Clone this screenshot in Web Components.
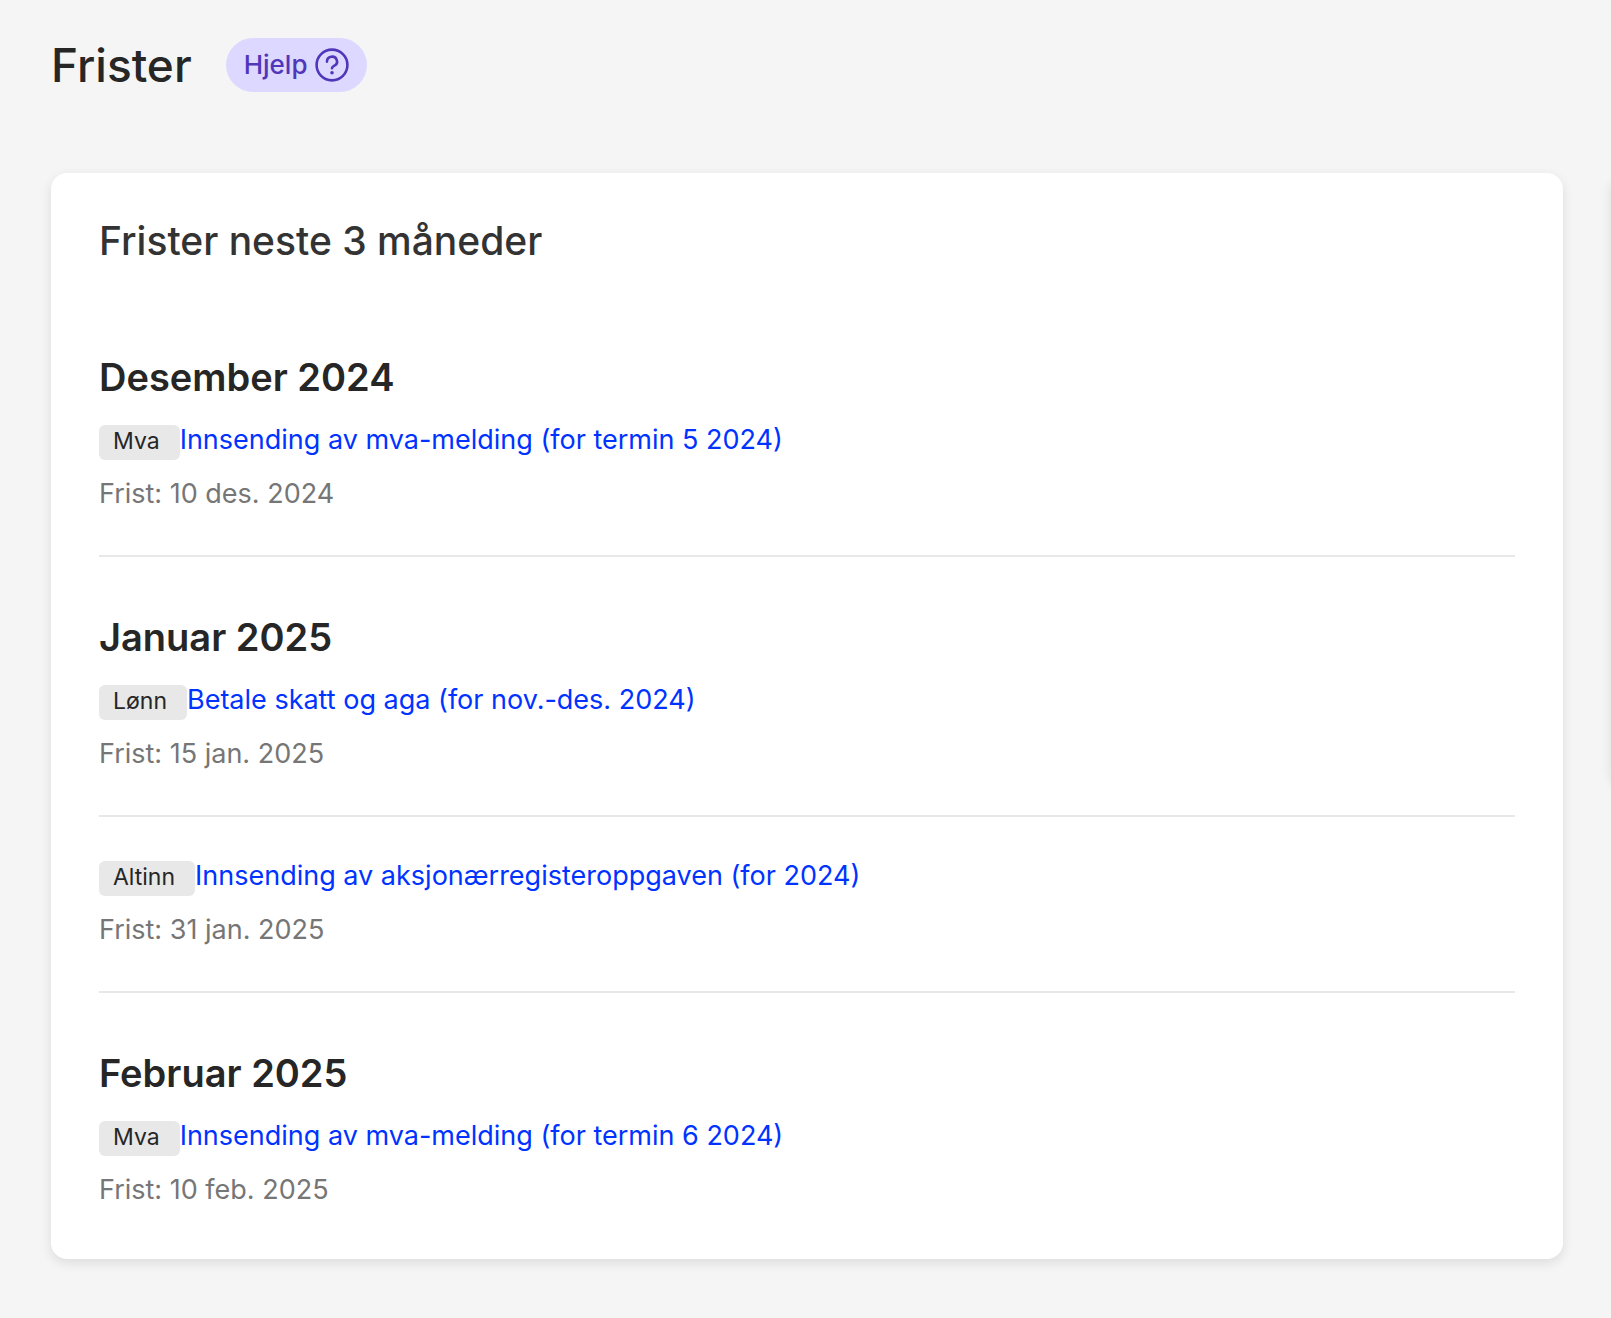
<!DOCTYPE html>
<html lang="nb">
<head>
<meta charset="utf-8">
<title>Frister</title>
<style>
  html { background: #f5f5f5; }
  body { margin: 0; min-height: 100vh; font-family: Inter, "Liberation Sans", sans-serif; color: #262626; }
</style>
</head>
<body>
<deadline-page>
  <page-header slot="header">Frister<help-button slot="action">Hjelp</help-button></page-header>
  <content-card heading="Frister neste 3 måneder">
    <month-group month="Desember 2024">
      <deadline-item category="Mva" due="Frist: 10 des. 2024">Innsending av mva-melding (for termin 5 2024)</deadline-item>
    </month-group>
    <month-group month="Januar 2025">
      <deadline-item category="Lønn" due="Frist: 15 jan. 2025">Betale skatt og aga (for nov.-des. 2024)</deadline-item>
      <deadline-item category="Altinn" due="Frist: 31 jan. 2025">Innsending av aksjonærregisteroppgaven (for 2024)</deadline-item>
    </month-group>
    <month-group month="Februar 2025">
      <deadline-item last category="Mva" due="Frist: 10 feb. 2025">Innsending av mva-melding (for termin 6 2024)</deadline-item>
    </month-group>
  </content-card>
  <side-card slot="side"></side-card>
</deadline-page>
<script>
const define = (name, html, setup) => {
  const template = document.createElement('template');
  template.innerHTML = html;
  customElements.define(name, class extends HTMLElement {
    constructor() {
      super();
      this.attachShadow({ mode: 'open' }).append(template.content.cloneNode(true));
    }
    connectedCallback() {
      if (setup) setup(this, this.shadowRoot);
    }
  });
};

define('deadline-page', `
  <style>
    :host { display: block; overflow: hidden; padding: 37px 48px 48px 51px; }
    .columns { display: flex; gap: 48px; align-items: flex-start; padding-top: 80px; }
    main { flex: 0 0 100%; min-width: 0; }
  </style>
  <slot name="header"></slot>
  <div class="columns">
    <main><slot></slot></main>
    <slot name="side"></slot>
  </div>`);

define('page-header', `
  <style>
    :host { display: block; }
    header { display: flex; align-items: center; gap: 34px; }
    h1 { margin: 0; font-size: 46px; line-height: 56px; font-weight: 500; }
  </style>
  <header><h1><slot></slot></h1><slot name="action"></slot></header>`);

define('help-button', `
  <style>
    :host { display: block; }
    button {
      display: flex; align-items: center; gap: 7px; height: 54px; padding: 0 18px;
      border: 0; border-radius: 27px; background: #ddd8ff; color: #5036b9;
      font: 500 26px/32px Inter, "Liberation Sans", sans-serif; cursor: pointer;
    }
    svg { display: block; }
  </style>
  <button type="button"><slot></slot>
    <svg width="34" height="34" viewBox="0 0 34 34" fill="none" stroke="currentColor" stroke-width="2.6" stroke-linecap="round" stroke-linejoin="round" aria-hidden="true">
      <circle cx="17" cy="17" r="15.4"/>
      <path d="M12 13.600a5 4.800 0 1 1 7.400 4.100c-1.700.9-2.400 1.500-2.400 2.500"/>
      <circle cx="17" cy="24.800" r="1.800" fill="currentColor" stroke="none"/>
    </svg>
  </button>`);

define('content-card', `
  <style>
    :host { display: block; box-sizing: border-box; padding: 45px 48px 49px; border-radius: 16px; background: #fff; box-shadow: 0 4px 12px rgba(0, 0, 0, .1); }
    h2 { margin: 0 0 33px; font-size: 39px; line-height: 46px; font-weight: 500; color: #333; }
  </style>
  <h2></h2>
  <slot></slot>`, (host, root) => {
    root.querySelector('h2').textContent = host.getAttribute('heading');
  });

define('side-card', `
  <style>
    :host { display: block; flex: 0 0 480px; height: 612px; border-radius: 16px; background: #fff; box-shadow: 0 4px 12px rgba(0, 0, 0, .1); }
  </style>`);

define('month-group', `
  <style>
    :host { display: block; padding-top: 57px; }
    h3 { margin: 0 0 20px; font-size: 38px; line-height: 46px; font-weight: 600; }
    ::slotted(deadline-item:not(:first-of-type)) { padding-top: 39px; }
  </style>
  <h3></h3>
  <slot></slot>`, (host, root) => {
    root.querySelector('h3').textContent = host.getAttribute('month');
  });

define('deadline-item', `
  <style>
    :host { display: block; padding-bottom: 41px; border-bottom: 2px solid #e8e8e8; font-size: 27px; line-height: 40px; }
    :host([last]) { padding-bottom: 0; border-bottom: 0; }
    .row { display: flex; align-items: baseline; }
    .tag { padding: 0 20px 2px 14px; border-radius: 6px; background: #e8e8e8; color: #262626; font-size: 23px; line-height: 33px; }
    a { color: #0033ff; text-decoration: none; }
    p { margin: 14px 0 0; color: #767676; }
  </style>
  <div class="row"><span class="tag"></span><a href="#"><slot></slot></a></div>
  <p></p>`, (host, root) => {
    root.querySelector('.tag').textContent = host.getAttribute('category');
    root.querySelector('p').textContent = host.getAttribute('due');
  });
</script>
</body>
</html>
